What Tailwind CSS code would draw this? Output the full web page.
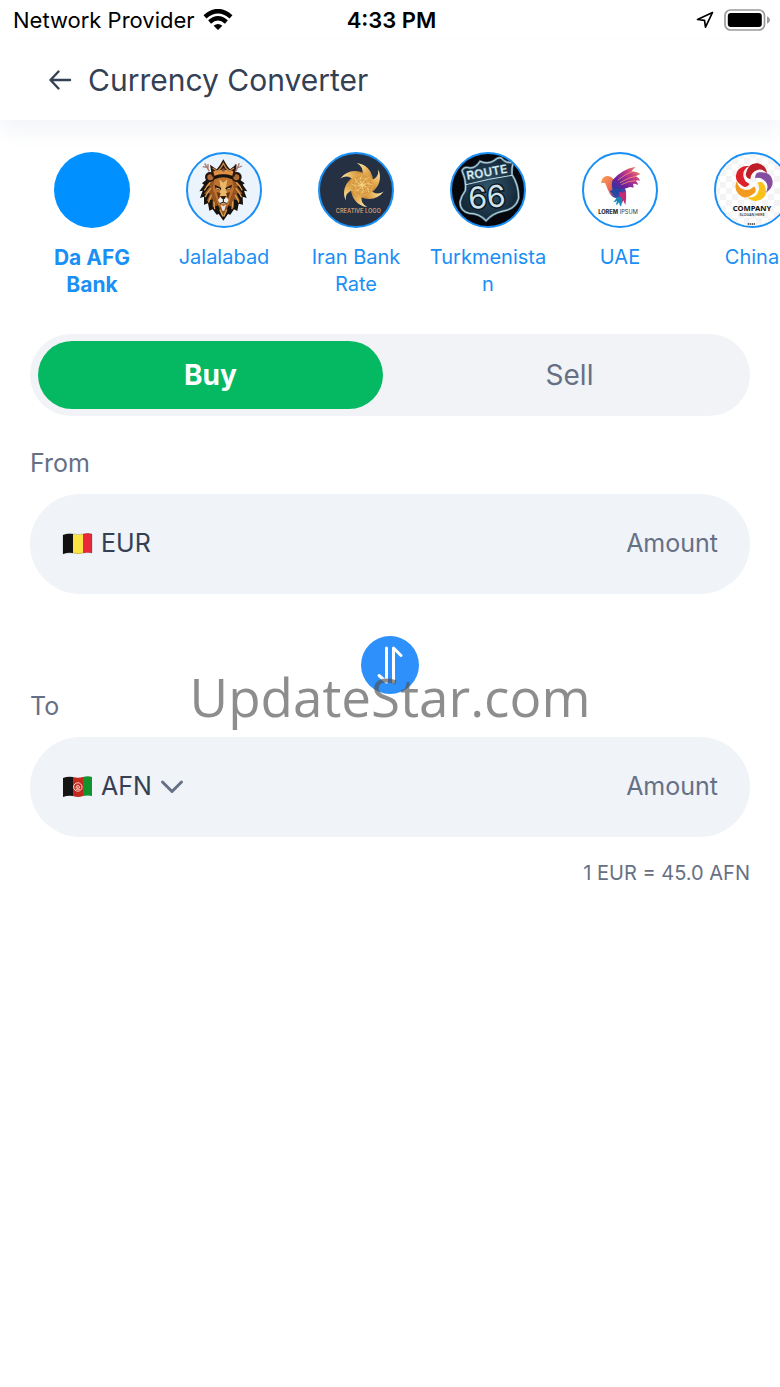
<!DOCTYPE html>
<html lang="en">
<head>
    <meta charset="UTF-8">
    <meta name="viewport" content="width=device-width, initial-scale=1.0">
    <title>Currency Converter</title>
    <script src="https://cdn.jsdelivr.net/npm/@tailwindcss/browser@4"></script>
</head>
<body class="relative min-h-screen overflow-x-hidden bg-white font-[Inter,sans-serif] text-[#344054]">

    <!-- Status bar -->
    <div class="grid h-10 grid-cols-3 items-center pl-[13px] pr-2.5 text-[22px] leading-7 text-black">
        <div class="flex items-center gap-2 whitespace-nowrap">
            <span>Network Provider</span>
            <svg class="h-[22px] w-[30px] shrink-0" viewBox="0 0 30 22" fill="none" stroke="#000" stroke-width="4.400">
                <path d="M2 7.800Q15 -3.600 28 7.800"/>
                <path d="M6.600 13Q15 5.600 23.400 13"/>
                <path d="M15 21L10.600 16.700Q15 13.200 19.400 16.700Z" fill="#000" stroke="none"/>
            </svg>
        </div>
        <span class="text-center font-semibold">4:33 PM</span>
        <div class="flex items-center justify-end gap-2.5">
            <svg class="h-[18px] w-[18px]" viewBox="0 0 18 18" fill="none" stroke="#000" stroke-width="1.700" stroke-linejoin="round">
                <path d="M16.500 1.500L1.500 8.500L8.500 9.300L9.500 16.200Z"/>
            </svg>
            <svg class="h-[22px] w-[46px]" viewBox="0 0 46 22">
                <rect x="1" y="1" width="39.500" height="20" rx="5.500" fill="none" stroke="#9a9a9a" stroke-width="1.700"/>
                <rect x="3.800" y="3.900" width="34" height="14.200" rx="3" fill="#000"/>
                <path d="M43 7.200Q46 8.500 46 11T43 14.800Z" fill="#9a9a9a"/>
            </svg>
        </div>
    </div>

    <!-- Header -->
    <header class="flex h-20 items-center gap-4 px-12 shadow-[0_12px_20px_#f3f5f9]">
        <a href="#" aria-label="Back">
            <svg class="h-6 w-6" viewBox="0 0 24 24" fill="none" stroke="#344054" stroke-width="2.400" stroke-linecap="round" stroke-linejoin="round">
                <path d="M22 12H2.500M10.500 3.500L2.500 12L10.500 20.500"/>
            </svg>
        </a>
        <h1 class="text-[30px] leading-10">Currency Converter</h1>
    </header>

    <!-- Markets -->
    <nav class="flex overflow-x-auto pl-[26px] pt-8 text-[20px] leading-[27px] text-[#1a8ff5] [scrollbar-width:none]">
        <a href="#" class="flex w-[132px] shrink-0 flex-col items-center gap-4">
            <span class="h-[76px] w-[76px] rounded-full bg-[#0090ff]"></span>
            <span class="w-[118px] text-center text-[21px] leading-[27px] font-bold break-words">Da AFG Bank</span>
        </a>
        <a href="#" class="flex w-[132px] shrink-0 flex-col items-center gap-4">
            <span class="h-[76px] w-[76px] overflow-hidden rounded-full border-2 border-[#1a8ff5] bg-[#ebf3fc]">
                <svg viewBox="6 6 216 216">
                    <g fill="none" stroke="#a77c72" stroke-width="4">
                        <path d="M70 58L56 34M62 46L50 44M66 50L66 36M150 58L160 34M154 48L168 42M150 50L148 36"/>
                    </g>
                    <path d="M72 68L60 84L48 94L54 98L40 118L50 116L42 138L54 134L54 158L66 154L70 176L80 172L92 188L98 186L112 206L126 186L133 188L144 172L154 177L158 155L171 158L170 134L182 138L174 116L184 118L170 98L176 94L160 82L150 66Z" fill="#19130f"/>
                    <g fill="#97531f">
                        <path d="M78 82L58 104L72 102L54 126L72 124L62 148L80 142L80 166L96 160L112 194L128 160L144 168L144 142L162 148L152 124L170 126L152 102L166 104L146 82Z"/>
                    </g>
                    <g fill="none" stroke="#dba052" stroke-width="4" stroke-linecap="round">
                        <path d="M72 92Q62 104 56 114M74 110Q62 124 58 134M76 130Q70 142 68 150M84 150Q84 164 86 170M152 92Q164 104 168 114M150 110Q162 124 166 134M148 130Q156 142 158 150M140 150Q140 164 138 170M102 174L110 192M122 174L114 192"/>
                    </g>
                    <circle cx="72" cy="75" r="15" fill="#211711"/><circle cx="73" cy="76" r="9" fill="#b26a31"/>
                    <circle cx="152" cy="75" r="15" fill="#211711"/><circle cx="151" cy="76" r="9" fill="#b26a31"/>
                    <path d="M86 82Q112 70 138 82L144 110L134 136L128 158L112 170L96 158L90 136L80 110Z" fill="#bd7330"/>
                    <path d="M100 82L112 92L124 82L120 108L124 132H100L104 108Z" fill="#eab869"/>
                    <path d="M86 98L106 108L103 115L89 110ZM138 98L118 108L121 115L135 110Z" fill="#1d120c"/>
                    <path d="M90 108L102 112M134 108L122 112" stroke="#f5c77c" stroke-width="3"/>
                    <path d="M92 120L104 124L98 142ZM132 120L120 124L126 142Z" fill="#643113"/>
                    <path d="M96 144Q104 130 112 137Q120 130 128 144Q122 158 112 154Q102 158 96 144Z" fill="#f2eee8"/>
                    <path d="M103 132H121L116 141H108Z" fill="#2b1c17"/>
                    <path d="M112 141V150M102 154Q112 148 122 154" fill="none" stroke="#15100d" stroke-width="3"/>
                    <path d="M104 158L112 163L120 158L115 176H109Z" fill="#e8e4dd"/>
                    <path d="M78 74L72 38L92 52L100 42L112 22L124 42L132 52L152 36L146 74Q112 62 78 74Z" fill="#2a1910"/>
                    <path d="M82 58Q112 48 142 58L139 71Q112 61 85 71Z" fill="#e09045"/>
                    <path d="M80 48L94 58L104 48L112 34L120 48L130 58L144 48" fill="none" stroke="#c48342" stroke-width="4"/>
                    <circle cx="112" cy="54" r="5" fill="#81543d"/>
                </svg>
            </span>
            <span class="w-[118px] text-center break-words">Jalalabad</span>
        </a>
        <a href="#" class="flex w-[132px] shrink-0 flex-col items-center gap-4">
            <span class="h-[76px] w-[76px] overflow-hidden rounded-full border-2 border-[#1a8ff5] bg-[#253042]">
                <svg viewBox="6 6 216 216">
                    <defs>
                        <linearGradient id="gold" x1="0" y1="0" x2="1" y2="1">
                            <stop offset="0" stop-color="#fff1bd"/><stop offset=".5" stop-color="#e8b45a"/><stop offset="1" stop-color="#c08032"/>
                        </linearGradient>
                        <path id="blade" d="M-16 -66Q26 -60 34 -14L0 -28Q8 -54 -16 -66Z"/>
                    </defs>
                    <g transform="translate(132 99)" fill="url(#gold)">
                        <use href="#blade"/>
                        <use href="#blade" transform="rotate(60)"/>
                        <use href="#blade" transform="rotate(120)"/>
                        <use href="#blade" transform="rotate(180)"/>
                        <use href="#blade" transform="rotate(240)"/>
                        <use href="#blade" transform="rotate(300)"/>
                    </g>
                    <circle cx="132" cy="99" r="35" fill="#dfa44c"/>
                    <g fill="none" stroke="#f7d88b" stroke-width="2.500">
                        <path d="M132 99Q112 94 112 78M132 99Q122 80 132 70M132 99Q138 78 152 78M132 99Q150 90 162 98M132 99Q152 104 152 120M132 99Q140 116 130 128M132 99Q124 118 110 116M132 99Q114 106 102 98"/>
                        <circle cx="132" cy="99" r="27" stroke="#b97b2f" stroke-dasharray="4 4"/>
                        <circle cx="132" cy="99" r="15" stroke="#b97b2f" stroke-dasharray="3 4"/>
                    </g>
                    <text x="121" y="183" text-anchor="middle" font-family="Inter, sans-serif" font-size="17" font-weight="600" fill="#d39a70">CREATIVE LOGO</text>
                </svg>
            </span>
            <span class="w-[118px] text-center break-words">Iran Bank Rate</span>
        </a>
        <a href="#" class="flex w-[132px] shrink-0 flex-col items-center gap-4">
            <span class="h-[76px] w-[76px] overflow-hidden rounded-full border-2 border-[#1a8ff5] bg-[#05070c]">
                <svg viewBox="6 6 216 216">
                    <defs>
                        <radialGradient id="shield"><stop offset="0" stop-color="#32596e"/><stop offset="1" stop-color="#142838"/></radialGradient>
                    </defs>
                    <path d="M36 56Q42 42 60 48Q78 48 90 28Q112 38 132 26Q146 14 154 18Q168 36 190 30Q184 50 186 68Q206 98 206 138Q198 172 156 178Q128 184 108 206Q88 184 58 184Q30 178 30 150Q34 132 46 116Q50 86 36 56Z" fill="url(#shield)" stroke="#587f92" stroke-width="7"/>
                    <path d="M36 56Q42 42 60 48Q78 48 90 28Q112 38 132 26Q146 14 154 18Q168 36 190 30Q184 50 186 68Q206 98 206 138Q198 172 156 178Q128 184 108 206Q88 184 58 184Q30 178 30 150Q34 132 46 116Q50 86 36 56Z" fill="none" stroke="#d3e8f0" stroke-width="2.500"/>
                    <path d="M48 98Q116 80 186 70" fill="none" stroke="#c3dce6" stroke-width="3"/>
                    <text transform="translate(52 84) rotate(-10)" font-family="Inter, sans-serif" font-size="36" font-weight="700" fill="#dff4fa" stroke="#64899b" stroke-width="1">ROUTE</text>
                    <text transform="translate(58 172) rotate(-5)" font-family="Inter, sans-serif" font-size="90" fill="#cfe4ec" stroke="#0d1720" stroke-width="9" paint-order="stroke">66</text>
                </svg>
            </span>
            <span class="w-[118px] text-center break-words">Turkmenistan</span>
        </a>
        <a href="#" class="flex w-[132px] shrink-0 flex-col items-center gap-4">
            <span class="h-[76px] w-[76px] overflow-hidden rounded-full border-2 border-[#1a8ff5] bg-white">
                <svg viewBox="6 6 216 216">
                    <defs>
                        <linearGradient id="wing" x1="0" y1="1" x2="1" y2="0">
                            <stop offset="0" stop-color="#183f9e"/><stop offset=".35" stop-color="#6d219b"/><stop offset=".65" stop-color="#c5358b"/><stop offset="1" stop-color="#f5a346"/>
                        </linearGradient>
                        <linearGradient id="plume" x1="0" y1="0" x2="1" y2="1">
                            <stop offset="0" stop-color="#f8a150"/><stop offset=".4" stop-color="#ed6656"/><stop offset=".65" stop-color="#3546ad"/><stop offset="1" stop-color="#d22a68"/>
                        </linearGradient>
                    </defs>
                    <path d="M57 94Q60 72 76 72Q88 72 96 84L126 100L132 118Q128 142 130 158L124 144L120 154L116 138Q94 142 84 126Q76 112 70 94Q64 90 57 94Z" fill="url(#plume)"/>
                    <path d="M92 84Q118 52 161 44Q152 53 148 58Q164 58 176 66Q166 68 162 73Q172 78 175 86Q166 84 161 86Q168 92 168 99Q158 94 153 96Q156 103 154 107Q144 102 136 108Q110 112 98 122Q84 104 92 84Z" fill="url(#wing)"/>
                    <path d="M108 84Q130 66 152 58M114 92Q140 76 164 72M118 98Q142 86 160 86" fill="none" stroke="#fbb36a" stroke-width="2"/>
                    <path d="M84 118Q100 104 118 112Q110 132 98 132Z" fill="#2447a4"/>
                    <path d="M106 134Q98 146 94 151Q101 150 105 146Q102 156 103 160Q109 156 111 150Q112 160 117 164Q122 150 120 136Z" fill="#1686b8"/>
                    <path d="M112 120Q130 124 132 114Q134 138 130 158Q124 140 112 132Z" fill="#c52c73"/>
                    <text x="108" y="186" text-anchor="middle" font-family="Inter, sans-serif" font-size="17" fill="#333"><tspan font-weight="800">LOREM</tspan> IPSUM</text>
                </svg>
            </span>
            <span class="w-[118px] text-center break-words">UAE</span>
        </a>
        <a href="#" class="flex w-[132px] shrink-0 flex-col items-center gap-4">
            <span class="h-[76px] w-[76px] overflow-hidden rounded-full border-2 border-[#1a8ff5] bg-white">
                <svg viewBox="6 6 216 216">
                    <defs>
                        <pattern id="checker" width="36" height="36" patternUnits="userSpaceOnUse">
                            <path d="M0 0H18V18H0ZM18 18H36V36H18Z" fill="#f4f4f5"/>
                        </pattern>
                        <path id="swirl" d="M-22 -26Q-14 -60 14 -56Q36 -52 42 -26Q26 -42 10 -35Q-8 -27 -9 -9Q-24 -12 -22 -26Z"/>
                    </defs>
                    <rect width="228" height="228" fill="url(#checker)"/>
                    <g transform="translate(118 90)">
                        <use href="#swirl" fill="#bd1e28"/>
                        <use href="#swirl" transform="rotate(72)" fill="#844da0"/>
                        <use href="#swirl" transform="rotate(144)" fill="#f8c316"/>
                        <use href="#swirl" transform="rotate(216)" fill="#f49a1f"/>
                        <use href="#swirl" transform="rotate(288)" fill="#df202b"/>
                    </g>
                    <text x="114" y="178" text-anchor="middle" font-family="'Noto Sans', sans-serif" font-size="23" font-weight="700" fill="#111">COMPANY</text>
                    <text x="114" y="193" text-anchor="middle" font-family="'Noto Sans', sans-serif" font-size="11" font-weight="600" fill="#444">SLOGAN HERE</text>
                    <path d="M101 216H125" stroke="#333" stroke-width="4" stroke-dasharray="4 2"/>
                </svg>
            </span>
            <span class="w-[118px] text-center break-words">China</span>
        </a>
    </nav>

    <main class="flex flex-col px-[30px] pt-9">
        <!-- Buy / Sell switch -->
        <div class="grid grid-cols-2 gap-3.5 rounded-full bg-[#f1f3f6] px-2 py-[7px] text-[28px]">
            <button type="button" class="h-[68px] rounded-full bg-[#04b962] font-bold text-white">Buy</button>
            <button type="button" class="h-[68px] rounded-full text-[#667085]">Sell</button>
        </div>

        <!-- From -->
        <label for="from-amount" class="mt-[31px] text-[25px] leading-8 text-[#667085]">From</label>
        <div class="mt-[15px] flex h-[100px] items-center rounded-full bg-[#f0f3f7] px-8 text-[25px]">
            <svg class="mr-2 h-[22px] w-[31px] shrink-0" viewBox="0 0 31 22">
                <path d="M1 2Q6 0 11 1V20Q6 19 1 21Z" fill="#111"/>
                <path d="M11 1Q16 2.500 21 1V20Q16 22 11 20Z" fill="#fbe344"/>
                <path d="M21 1Q26 -0.500 30 1V20Q26 19 21 20Z" fill="#ea2839"/>
                <path d="M1 2Q6 0 11 1T21 1T30 1V20Q26 19 21 20T11 20T1 21Z" fill="none" stroke="#000" stroke-opacity=".25" stroke-width=".700"/>
            </svg>
            <span class="text-[#344054]">EUR</span>
            <input id="from-amount" type="text" inputmode="decimal" placeholder="Amount" class="min-w-0 flex-1 bg-transparent text-right outline-none placeholder:text-[#667085]">
        </div>

        <!-- Swap -->
        <button type="button" aria-label="Swap currencies" class="-mb-1 mt-[42px] flex h-[58px] w-[58px] items-center justify-center self-center rounded-full bg-[#2e90fa]">
            <svg class="h-10 w-7" viewBox="0 0 28 40" fill="none" stroke="#fff" stroke-width="3" stroke-linecap="round" stroke-linejoin="round">
                <path d="M10.500 3V37L3 30.500M17.500 37V3L25 10.500"/>
            </svg>
        </button>

        <!-- To -->
        <label for="to-amount" class="text-[25px] leading-8 text-[#667085]">To</label>
        <div class="mt-[15px] flex h-[100px] items-center rounded-full bg-[#f0f3f7] px-8 text-[25px]">
            <svg class="mr-2 h-[22px] w-[31px] shrink-0" viewBox="0 0 31 22">
                <path d="M1 2Q6 0 11 1V20Q6 19 1 21Z" fill="#151515"/>
                <path d="M11 1Q16 2.500 21 1V20Q16 22 11 20Z" fill="#c5281c"/>
                <path d="M21 1Q26 -0.500 30 1V20Q26 19 21 20Z" fill="#12932b"/>
                <circle cx="15.800" cy="11" r="4.200" fill="none" stroke="#f6d5cf" stroke-width="1"/>
                <path d="M13.600 13.200H18M14.200 12V10.400Q15.800 8 17.400 10.400V12M15.800 10.500V13" fill="none" stroke="#f6d5cf" stroke-width="1"/>
            </svg>
            <select aria-label="Target currency" class="field-sizing-content appearance-none bg-transparent text-[#344054] outline-none">
                <option>AFN</option>
            </select>
            <svg class="ml-2 h-4 w-6 shrink-0" viewBox="0 0 24 16" fill="none" stroke="#667085" stroke-width="3" stroke-linecap="round" stroke-linejoin="round">
                <path d="M2.500 3L12 12.500L21.500 3"/>
            </svg>
            <input id="to-amount" type="text" inputmode="decimal" placeholder="Amount" class="min-w-0 flex-1 bg-transparent text-right outline-none placeholder:text-[#667085]">
        </div>
        <p class="mt-5 text-right text-[20px] leading-8 text-[#667085]">1 EUR = 45.0 AFN</p>
    </main>

    <!-- Watermark -->
    <div class="pointer-events-none absolute inset-x-0 top-[659px] text-center font-['Open_Sans',sans-serif] text-[53px] leading-[76px] text-[#505050]/65">UpdateStar.com</div>
</body>
</html>
